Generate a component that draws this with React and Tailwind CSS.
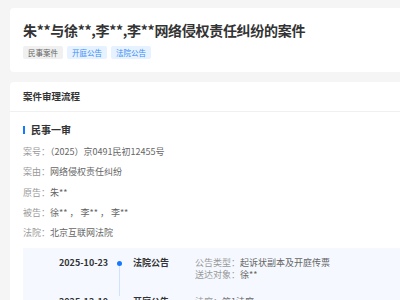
export default function App() {
  const rows = [
    ["案号：", "（2025）京0491民初12455号"],
    ["案由：", "网络侵权责任纠纷"],
    ["原告：", "朱**"],
    ["被告：", "徐** ， 李** ， 李**"],
    ["法院：", "北京互联网法院"],
  ];
  const events = [
    {
      date: "2025-10-23",
      title: "法院公告",
      details: [
        ["公告类型：", "起诉状副本及开庭传票"],
        ["送达对象：", "徐**"],
      ],
    },
    {
      date: "2025-12-10",
      title: "开庭公告",
      details: [
        ["法庭：", "第1法庭"],
        ["当事人：", "朱**"],
      ],
    },
  ];
  return (
    <div className="w-[400px] h-[300px] overflow-hidden bg-[#f5f5f5] pt-[8px] pl-[10px] flex flex-col font-['Noto_Sans_CJK_SC','Noto_Sans',sans-serif]">
      <div className="bg-white rounded-l-[4px] pl-[13px] pt-[12px] pb-[13px]">
        <div className="text-[14px] tracking-[-0.3px] leading-[20px] font-bold text-[#333] whitespace-nowrap">
          朱**与徐**,李**,李**网络侵权责任纠纷的案件
        </div>
        <div className="mt-[6px] flex gap-[4px]">
          <span className="h-[13px] px-[5px] text-[7.5px] leading-[13px] rounded-[2px] bg-[#f0f0f0] text-[#666]">民事案件</span>
          <span className="h-[13px] px-[5px] text-[7.5px] leading-[13px] rounded-[2px] bg-[#e6f2ff] text-[#3a8ef6]">开庭公告</span>
          <span className="h-[13px] px-[5px] text-[7.5px] leading-[13px] rounded-[2px] bg-[#e6f2ff] text-[#3a8ef6]">法院公告</span>
        </div>
      </div>

      <div className="mt-[10px] bg-white rounded-l-[4px] flex-1">
        <div className="h-[30px] flex items-center pl-[13px] border-b border-[#f0f0f0] text-[9.5px] font-bold text-[#333]">
          案件审理流程
        </div>
        <div className="pl-[13px] pt-[11px]">
          <div className="flex items-center h-[14px]">
            <span className="w-[2px] h-[8px] bg-[#1677ff]"></span>
            <span className="ml-[6px] text-[10px] leading-[14px] font-bold text-[#333]">民事一审</span>
          </div>
          <div className="mt-[5px] flex flex-col">
            {rows.map(([k, v]) => (
              <div key={k} className="h-[20.3px] leading-[20.3px] text-[9px] whitespace-nowrap">
                <span className="text-[#999]">{k}</span>
                <span className="text-[#666]">{v}</span>
              </div>
            ))}
          </div>
          <div className="mt-[5px] bg-[#f5f9ff] pt-[8.5px] pl-[36px]">
            {events.map((e) => (
              <div key={e.date} className="flex h-[39px]">
                <div className="w-[53px] text-[9px] leading-[12.5px] font-bold text-[#333] whitespace-nowrap">{e.date}</div>
                <div className="w-[14px] flex flex-col items-center">
                  <span className="mt-[4px] w-[5px] h-[5px] rounded-full bg-[#1677ff]"></span>
                  <span className="w-px flex-1 bg-[#cfe2ff]"></span>
                </div>
                <div className="ml-[7px] w-[62px] text-[9px] leading-[12.5px] font-bold text-[#333]">{e.title}</div>
                <div className="flex flex-col text-[9px] leading-[12.5px] whitespace-nowrap">
                  {e.details.map(([k, v]) => (
                    <div key={k}>
                      <span className="text-[#999]">{k}</span>
                      <span className="text-[#666]">{v}</span>
                    </div>
                  ))}
                </div>
              </div>
            ))}
          </div>
        </div>
      </div>
    </div>
  );
}
